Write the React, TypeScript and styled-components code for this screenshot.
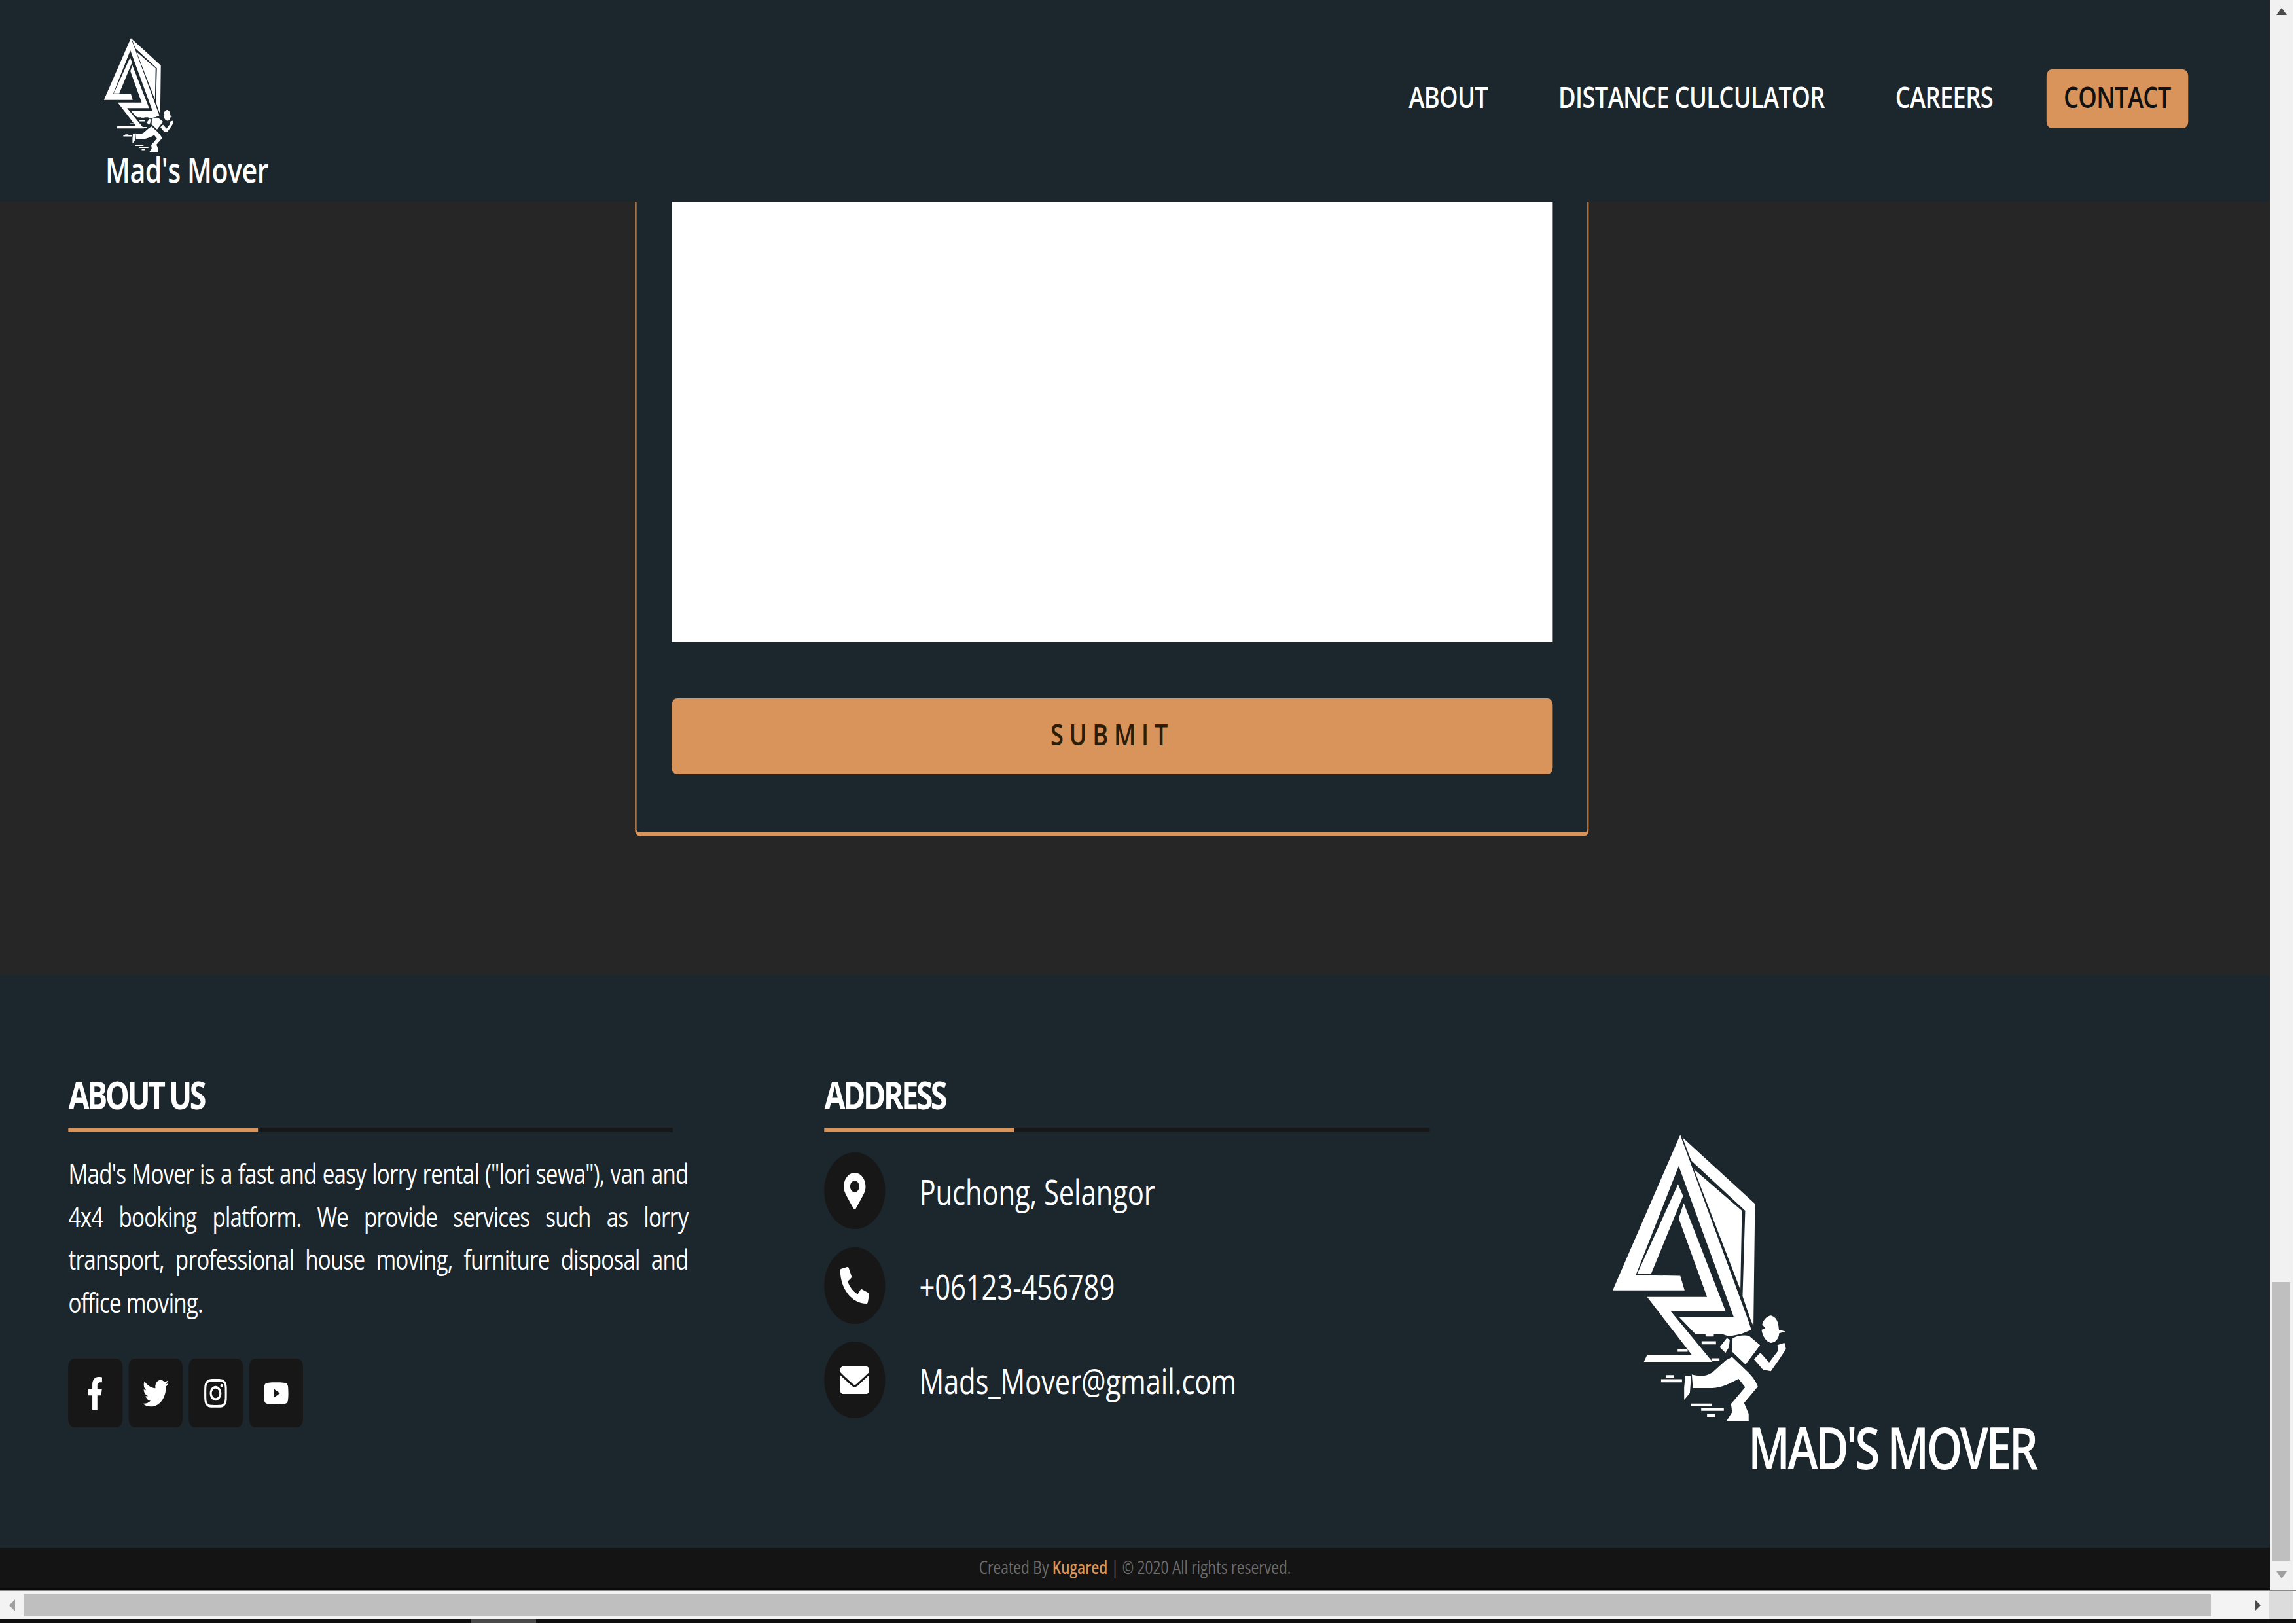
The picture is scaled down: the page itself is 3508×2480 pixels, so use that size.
import styled, { createGlobalStyle } from 'styled-components';
import {
  FaEnvelope,
  FaFacebookF,
  FaInstagram,
  FaMapMarkerAlt,
  FaPhoneAlt,
  FaTwitter,
  FaYoutube,
} from 'react-icons/fa';

// the capture is squeezed horizontally, so the page is laid out wider and scaled back
const SCALE_X = 0.79;
const sx = (n: number) => `${n / SCALE_X}px`;

const PANEL = '#1c262d';
const ORANGE = '#d8945a';
const FONT = `'Open Sans', 'Liberation Sans', sans-serif`;

const GlobalStyle = createGlobalStyle`
  html, body {
    margin: 0;
    padding: 0;
    width: 3508px;
    height: 2480px;
    overflow: hidden;
    background: #fff;
  }
  * {
    box-sizing: border-box;
  }
`;

const Screen = styled.div`
  display: flex;
  flex-direction: column;
  width: 3508px;
  height: 2480px;
`;

const TopRow = styled.div`
  display: flex;
  height: 2430px;
`;

const Frame = styled.div`
  width: 3468px;
  height: 2430px;
  overflow: hidden;
  background: #0a0a0a;
`;

const Page = styled.div`
  display: flex;
  flex-direction: column;
  width: ${sx(3468)};
  transform: scaleX(${SCALE_X});
  transform-origin: left top;
  font-family: ${FONT};
  color: #fff;
`;

const Header = styled.header`
  display: flex;
  justify-content: space-between;
  height: 308px;
  padding: 58px ${sx(125)} 0 ${sx(159)};
  background: ${PANEL};
`;

const Brand = styled.div`
  display: flex;
  flex-direction: column;
`;

const BrandName = styled.div`
  margin-left: ${sx(2)};
  font-size: 52px;
  font-weight: 600;
  line-height: 54px;
  letter-spacing: -0.6px;
`;

const Nav = styled.nav`
  display: flex;
  align-items: flex-start;
  gap: ${sx(55)};
  padding-top: 48px;
`;

const NavLink = styled.a<{ $active?: boolean }>`
  padding: 18px ${sx(26.5)} 26px;
  border-radius: 10px;
  font-size: 46px;
  font-weight: 600;
  line-height: 46px;
  letter-spacing: -0.85px;
  white-space: nowrap;
  color: ${(p) => (p.$active ? '#111' : '#fff')};
  background: ${(p) => (p.$active ? ORANGE : 'transparent')};
`;

const Main = styled.main`
  display: flex;
  align-items: flex-end;
  height: 1182px;
  padding: 0 0 212px ${sx(970)};
  background: #262626;
`;

const Card = styled.form`
  display: flex;
  flex-direction: column;
  width: ${sx(1458)};
  height: 970px;
  padding: 0 ${sx(53.5)} 89px;
  border: solid ${ORANGE};
  border-width: 0 ${sx(3)} 6px;
  border-radius: 0 0 10px 10px;
  background: ${PANEL};
`;

const MessageBox = styled.textarea`
  display: block;
  flex: 1;
  width: 100%;
  margin: 0 0 86px;
  border: 0;
  outline: 0;
  resize: none;
  background: #fff;
`;

const SubmitButton = styled.button`
  height: 116px;
  padding: 0 0 8px;
  border: 0;
  border-radius: 10px;
  font-family: ${FONT};
  font-size: 46px;
  font-weight: 600;
  letter-spacing: 11px;
  color: #2b1d08;
  background: ${ORANGE};
`;

const Footer = styled.footer`
  display: grid;
  grid-template-columns: ${sx(1155)} ${sx(1204.5)} 1fr;
  height: 875px;
  padding: 152px 0 0 ${sx(104.5)};
  background: ${PANEL};
`;

const Column = styled.div`
  display: flex;
  flex-direction: column;
`;

const ColumnTitle = styled.h3`
  margin: 0 0 21px;
  font-size: 59px;
  font-weight: 700;
  line-height: 60px;
  letter-spacing: -4.5px;
`;

const Rule = styled.div<{ $width: number }>`
  display: flex;
  width: ${(p) => sx(p.$width)};
  height: 7px;
  background: #171717;
`;

const RuleAccent = styled.div`
  width: ${sx(290)};
  background: ${ORANGE};
`;

const AboutText = styled.p`
  width: ${sx(947)};
  margin: 30px 0 54px;
  font-size: 42px;
  line-height: 65.6px;
  letter-spacing: -1px;
  text-align: justify;
`;

const SocialRow = styled.div`
  display: flex;
  gap: ${sx(9.5)};
`;

const SocialLink = styled.a`
  display: flex;
  align-items: center;
  justify-content: center;
  width: ${sx(82.5)};
  height: 105px;
  border-radius: 12px;
  font-size: 50px;
  background: #171717;
`;

const ContactList = styled.div`
  display: flex;
  flex-direction: column;
  gap: 27.5px;
  margin-top: 31px;
`;

const ContactRow = styled.div`
  display: flex;
  align-items: center;
  gap: ${sx(52)};
`;

const ContactIcon = styled.span`
  display: flex;
  align-items: center;
  justify-content: center;
  width: ${sx(93)};
  height: 117px;
  border-radius: 50%;
  font-size: 56px;
  background: #171717;
`;

const ContactText = styled.span`
  padding-top: 3px;
  font-size: 53px;
  line-height: 60px;
  letter-spacing: -0.2px;
`;

const FooterBrand = styled.div`
  display: flex;
  flex-direction: column;
  padding-top: 92px;
`;

const FooterBrandName = styled.div`
  margin-left: ${sx(207)};
  font-size: 88px;
  font-weight: 600;
  line-height: 80px;
  letter-spacing: -4.6px;
  white-space: nowrap;
`;

const CopyBar = styled.div`
  height: 62px;
  font-size: 26.5px;
  line-height: 60px;
  text-align: center;
  color: #6d6d6d;
  background: #141414;
`;

const CopyAccent = styled.b`
  font-weight: 600;
  color: ${ORANGE};
`;

const LogoSvg = styled.svg<{ $w: number; $h: number }>`
  display: block;
  width: ${(p) => sx(p.$w)};
  height: ${(p) => p.$h}px;
  fill: #fff;
`;

const BackpackPath = styled.path`
  stroke: ${PANEL};
  stroke-width: 5;
`;

const VerticalBar = styled.div`
  display: flex;
  flex-direction: column;
  align-items: center;
  width: 40px;
  padding-top: 12px;
  border-right: 5px solid #fff;
  background: #f1f1f1;
`;

const VerticalThumb = styled.div`
  flex: none;
  width: 27px;
  height: 426px;
  margin: 1936px 0 16px;
  background: #bfbfbf;
`;

const Arrow = styled.span<{ $dir: 'up' | 'down' | 'left' | 'right'; $dark?: boolean }>`
  flex: none;
  width: 0;
  height: 0;
  border-style: solid;
  border-color: transparent;
  ${(p) => {
    const color = p.$dark ? '#4a4a4a' : '#a0a0a0';
    if (p.$dir === 'up') return `border-width: 0 8px 11px; border-bottom-color: ${color};`;
    if (p.$dir === 'down') return `border-width: 11px 8px 0; border-top-color: ${color};`;
    if (p.$dir === 'left') return `border-width: 9px 9px 9px 0; border-right-color: ${color};`;
    return `border-width: 9px 0 9px 9px; border-left-color: ${color};`;
  }}
`;

const HorizontalBar = styled.div`
  display: flex;
  align-items: center;
  height: 44px;
  border-top: 1px solid #888;
  background: #f3f3f3;
`;

const ArrowCell = styled.div`
  display: flex;
  align-items: center;
  justify-content: center;
  width: 36px;
`;

const HorizontalThumb = styled.div`
  width: 3342px;
  height: 34px;
  margin-right: 53px;
  background: #bfbfbf;
`;

const BarCorner = styled.div`
  align-self: stretch;
  width: 36px;
  background: #dcdcdc;
`;

const BarEnd = styled.div`
  align-self: stretch;
  width: 5px;
  background: #fff;
`;

const BottomStrip = styled.div`
  height: 6px;
  padding-left: 719px;
  background: #0f0f0f;
`;

const StripPatch = styled.div`
  width: 100px;
  height: 6px;
  background: #4a4a4a;
`;

const Logo = ({ w, h }: { w: number; h: number }) => (
  <LogoSvg viewBox='12 12 796 1310' preserveAspectRatio='none' $w={w} $h={h}>
    {/* outer A with the long diagonal */}
    <path d='M322 12 L12 725 L342 725 L322 658 L118 655 L315 155 L568 848 L318 848 L392 925 L515 925 L545 935 L600 925 L648 905 L636 868 L335 48 Z' />
    {/* inner strip of the A */}
    <path d='M312 238 L335 292 L188 650 L124 650 Z' />
    {/* Z shape */}
    <path d='M338 325 L530 820 L278 820 L470 1052 L155 1052 L170 1020 L375 1020 L170 755 L445 755 L315 395 Z' />
    {/* right panel, outer band and inner pane */}
    <path d='M332 24 L665 328 L658 888 L646 862 L608 752 L620 360 L372 130 Z' />
    <path d='M385 170 L605 360 L598 722 Z' />
    {/* speed lines */}
    <path d='M438 925 H476 V936 H438 Z M420 958 H486 V972 H420 Z M310 994 H356 V1006 H310 Z M465 1036 H502 V1046 H465 Z M256 1113 H293 V1125 H256 Z M234 1132 H330 V1146 H234 Z M370 1243 H466 V1255 H370 Z M418 1264 H522 V1276 H418 Z M445 1292 H482 V1304 H445 Z' />
    {/* runner: head and cap */}
    <path d='M698 880 C705 855 725 840 738 840 C755 845 772 855 775 905 L806 913 L776 921 C775 945 758 965 738 965 C715 960 700 935 695 905 L712 898 Z' />
    {/* arm */}
    <path d='M690 1010 L730 1055 L772 1000 L768 975 L800 965 L808 992 L780 1035 L738 1095 L702 1088 L660 1040 Z' />
    {/* body and legs */}
    <path d='M375 1110 C410 1120 440 1120 470 1100 L532 1045 L560 1030 L615 1082 C645 1110 668 1135 678 1165 L615 1240 L636 1290 L636 1322 L535 1322 L560 1282 L555 1245 L620 1168 L590 1130 C560 1145 510 1172 470 1172 L380 1172 Z' />
    <path d='M345 1115 L372 1118 L366 1195 L340 1226 L340 1170 Z' />
    {/* backpack */}
    <BackpackPath d='M560 942 C585 928 620 925 640 932 L692 975 L622 1068 L556 1005 Z' />
    <BackpackPath d='M500 985 L535 940 L552 950 L548 985 L530 1015 Z' />
  </LogoSvg>
);

export default function App() {
  return (
    <>
      <GlobalStyle />
      <Screen>
        <TopRow>
          <Frame>
            <Page>
              <Header>
                <Brand>
                  <Logo w={106} h={174} />
                  <BrandName>Mad's Mover</BrandName>
                </Brand>
                <Nav>
                  <NavLink>ABOUT</NavLink>
                  <NavLink>DISTANCE CULCULATOR</NavLink>
                  <NavLink>CAREERS</NavLink>
                  <NavLink $active>CONTACT</NavLink>
                </Nav>
              </Header>
              <Main>
                <Card>
                  <MessageBox readOnly />
                  <SubmitButton type='button'>SUBMIT</SubmitButton>
                </Card>
              </Main>
              <Footer>
                <Column>
                  <ColumnTitle>ABOUT US</ColumnTitle>
                  <Rule $width={923}>
                    <RuleAccent />
                  </Rule>
                  <AboutText>
                    Mad's Mover is a fast and easy lorry rental ("lori sewa"), van and 4x4 booking
                    platform. We provide services such as lorry transport, professional house
                    moving, furniture disposal and office moving.
                  </AboutText>
                  <SocialRow>
                    <SocialLink>
                      <FaFacebookF />
                    </SocialLink>
                    <SocialLink>
                      <FaTwitter />
                    </SocialLink>
                    <SocialLink>
                      <FaInstagram />
                    </SocialLink>
                    <SocialLink>
                      <FaYoutube />
                    </SocialLink>
                  </SocialRow>
                </Column>
                <Column>
                  <ColumnTitle>ADDRESS</ColumnTitle>
                  <Rule $width={925}>
                    <RuleAccent />
                  </Rule>
                  <ContactList>
                    <ContactRow>
                      <ContactIcon>
                        <FaMapMarkerAlt />
                      </ContactIcon>
                      <ContactText>Puchong, Selangor</ContactText>
                    </ContactRow>
                    <ContactRow>
                      <ContactIcon>
                        <FaPhoneAlt />
                      </ContactIcon>
                      <ContactText>+06123-456789</ContactText>
                    </ContactRow>
                    <ContactRow>
                      <ContactIcon>
                        <FaEnvelope />
                      </ContactIcon>
                      <ContactText>Mads_Mover@gmail.com</ContactText>
                    </ContactRow>
                  </ContactList>
                </Column>
                <FooterBrand>
                  <Logo w={265} h={437} />
                  <FooterBrandName>MAD'S MOVER</FooterBrandName>
                </FooterBrand>
              </Footer>
              <CopyBar>
                Created By <CopyAccent>Kugared</CopyAccent> | © 2020 All rights reserved.
              </CopyBar>
            </Page>
          </Frame>
          <VerticalBar>
            <Arrow $dir='up' $dark />
            <VerticalThumb />
            <Arrow $dir='down' />
          </VerticalBar>
        </TopRow>
        <HorizontalBar>
          <ArrowCell>
            <Arrow $dir='left' />
          </ArrowCell>
          <HorizontalThumb />
          <ArrowCell>
            <Arrow $dir='right' $dark />
          </ArrowCell>
          <BarCorner />
          <BarEnd />
        </HorizontalBar>
        <BottomStrip>
          <StripPatch />
        </BottomStrip>
      </Screen>
    </>
  );
}
